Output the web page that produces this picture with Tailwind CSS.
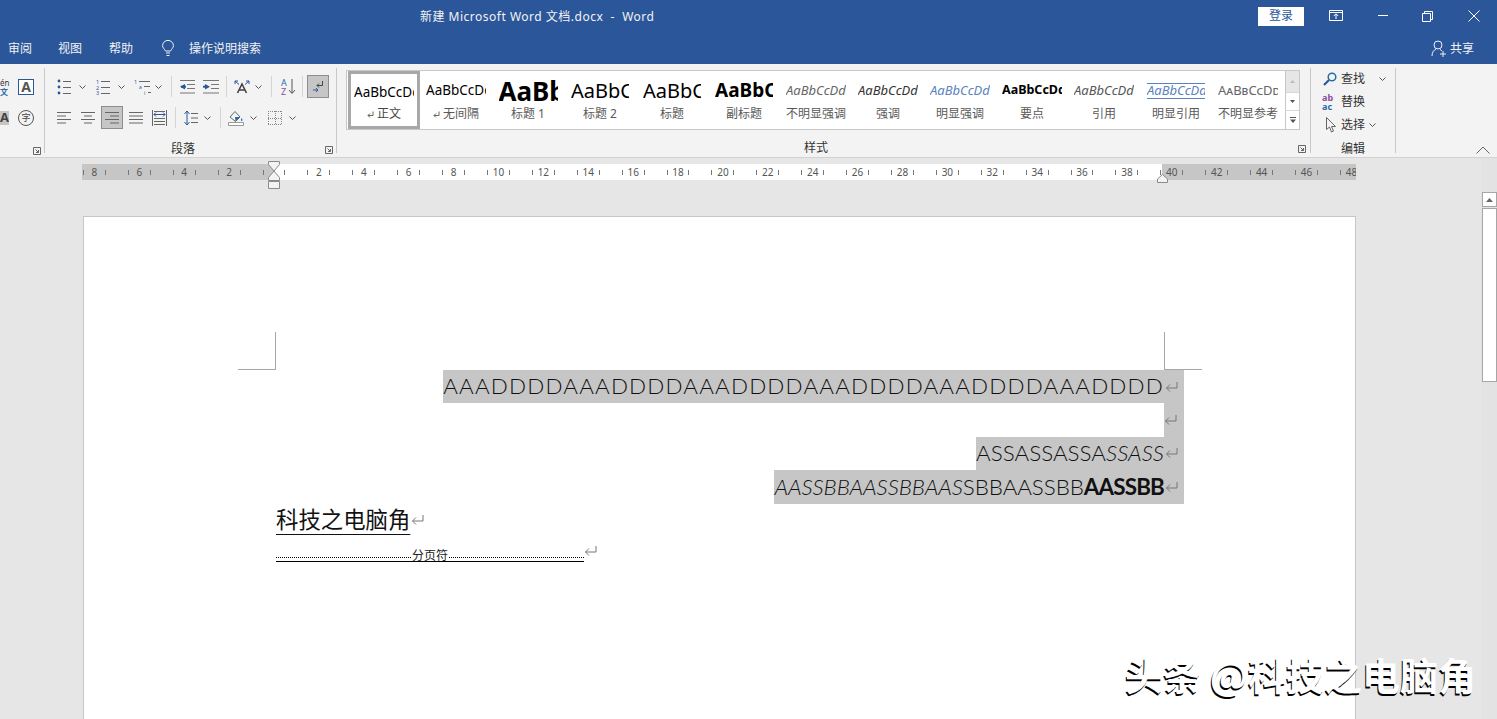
<!DOCTYPE html>
<html lang="zh">
<head>
<meta charset="utf-8">
<title>新建 Microsoft Word 文档.docx - Word</title>
<script src="https://cdn.jsdelivr.net/npm/@tailwindcss/browser@4"></script>
</head>
<body class="w-[1497px] h-[719px] overflow-hidden bg-[#e6e6e6] font-['Noto_Sans','Noto_Sans_CJK_SC',sans-serif] text-[12px] leading-none">

<!-- title bar -->
<header class="h-[32px] bg-[#2b579a] flex items-center text-[#f2f2f2]">
  <div class="ml-[420px] w-[838px] mt-[1px] text-[12px] tracking-[0.500px] whitespace-pre">新建 Microsoft Word 文档.docx  -  Word</div>
  <button class="w-[46px] h-[19px] bg-white text-[#2b579a] text-[12px] flex items-center justify-center">登录</button>
  <svg class="ml-[25px]" width="14" height="12" viewBox="0 0 14 12" fill="none" stroke="#fff"><path d="M.5 .5h13v10h-13zM.5 2.500h13M7 9V4M4.800 6 7 3.800 9.200 6"/></svg>
  <svg class="ml-[34px]" width="12" height="2" viewBox="0 0 12 2"><path d="M1 .5h10" stroke="#fff"/></svg>
  <svg class="ml-[33px]" width="11" height="11" viewBox="0 0 11 11" fill="none" stroke="#fff"><path d="M.5 2.500h8v8h-8zM2.500 2.500v-2h8v8h-2"/></svg>
  <svg class="ml-[35px]" width="12" height="12" viewBox="0 0 12 12" fill="none" stroke="#fff"><path d="M.5 .5l11 11M11.500 .5l-11 11"/></svg>
</header>

<!-- tab row -->
<nav class="h-[32px] bg-[#2b579a] flex items-center text-[#f2f2f2] text-[12px] pt-[1px]">
  <span class="ml-[8px]">审阅</span>
  <span class="ml-[26px]">视图</span>
  <span class="ml-[27px]">帮助</span>
  <svg class="ml-[29px]" width="12" height="17" viewBox="0 0 12 17" fill="none" stroke="#f2f2f2"><path d="M3.500 11C2.500 9 .6 8 .6 5.600a5.400 5.200 0 0 1 10.800 0C11.400 8 9.500 9 8.500 11zM4 13h4M4.500 15.500h3"/></svg>
  <span class="ml-[15px]">操作说明搜索</span>
  <svg class="ml-[1170px]" width="16" height="17" viewBox="0 0 16 17" fill="none" stroke="#f2f2f2"><circle cx="7" cy="5" r="4"/><path d="M1 16c0-4 2-6 4-7M9 9.500c.8.300 1.500.8 2 1.500M9 14h6M12 11v6"/></svg>
  <span class="ml-[3px]">共享</span>
</nav>

<!-- ribbon -->
<section class="h-[94px] bg-[#f3f3f3] border-b border-[#d2d2d2] flex text-[#444]">

  <!-- font group, cut off on the left -->
  <div class="w-[45px] my-[4px] border-r border-[#c8c8c8] relative shrink-0">
    <div class="h-[23px] mt-[7px] flex items-center">
      <div class="w-[18px] text-[8px] leading-[9px] text-[#333]">én<br><span class="text-[#2b6ca8] font-bold">文</span></div>
      <div class="w-[16px] h-[16px] border border-[#2b579a] bg-white flex items-center justify-center text-[14px] font-bold text-[#555]">A</div>
    </div>
    <div class="h-[23px] mt-[8px] flex items-center">
      <div class="w-[9px] h-[14px] bg-[#c6c6c6] text-[13px] font-bold flex items-center justify-end overflow-hidden">A</div>
      <div class="ml-[9px] w-[16px] h-[16px] rounded-full border border-[#555] flex items-center justify-center text-[9px]">字</div>
    </div>
    <svg class="absolute left-[33px] top-[79px]" width="8" height="8" viewBox="0 0 8 8" fill="none" stroke="#666"><path d="M.5 .5h7v7h-7zM2.500 2.500l3 3M5.500 3v2.500H3"/></svg>
  </div>

  <!-- paragraph group -->
  <div class="w-[292px] my-[4px] border-r border-[#c8c8c8] shrink-0">
    <div class="h-[23px] mt-[7px] flex items-center">
      <svg class="ml-[12px]" width="14" height="16" viewBox="0 0 14 16" stroke="#666"><circle cx="2" cy="2" r="1.400" fill="#2b579a" stroke="none"/><circle cx="2" cy="8" r="1.400" fill="#2b579a" stroke="none"/><circle cx="2" cy="14" r="1.400" fill="#2b579a" stroke="none"/><path d="M6 2.500h8M6 8.500h8M6 14.500h8"/></svg>
      <svg class="ml-[8px]" width="7" height="4" viewBox="0 0 7 4" fill="none" stroke="#555"><path d="M.5 .5l3 3 3-3"/></svg>
      <svg class="ml-[10px]" width="14" height="16" viewBox="0 0 14 16" stroke="#666"><text x="0" y="5" font-size="5.500" fill="#2b579a" stroke="none">1</text><text x="0" y="11" font-size="5.500" fill="#2b579a" stroke="none">2</text><text x="0" y="16" font-size="5.500" fill="#2b579a" stroke="none">3</text><path d="M5 2.500h9M5 8.500h9M5 14.500h9"/></svg>
      <svg class="ml-[8px]" width="7" height="4" viewBox="0 0 7 4" fill="none" stroke="#555"><path d="M.5 .5l3 3 3-3"/></svg>
      <svg class="ml-[9px]" width="18" height="16" viewBox="0 0 18 16" stroke="#666"><text x="0" y="5" font-size="5.500" fill="#2b579a" stroke="none">1</text><text x="5" y="10" font-size="5" fill="#2b579a" stroke="none">a</text><text x="10" y="16" font-size="5" fill="#2b579a" stroke="none">i</text><path d="M5 2.500h11M10 7.500h6M14 13.500h3"/></svg>
      <svg class="ml-[3px]" width="7" height="4" viewBox="0 0 7 4" fill="none" stroke="#555"><path d="M.5 .5l3 3 3-3"/></svg>
      <div class="ml-[9px] w-px h-[21px] bg-[#d4d4d4]"></div>
      <svg class="ml-[7px]" width="16" height="14" viewBox="0 0 16 14" fill="none" stroke="#777"><path d="M1 .5h15M8 4.500h8M8 8.500h8M1 13h15"/><path d="M6 4v5.500L1 6.700z" fill="#2b579a" stroke="none"/><path d="M2 6.700h5" stroke="#2b579a" stroke-width="2"/></svg>
      <svg class="ml-[8px]" width="16" height="14" viewBox="0 0 16 14" fill="none" stroke="#777"><path d="M0 .5h16M8 4.500h8M8 8.500h8M0 13h16"/><path d="M2 4v5.500L7 6.700z" fill="#2b579a" stroke="none"/><path d="M0 6.700h4" stroke="#2b579a" stroke-width="2"/></svg>
      <div class="ml-[7px] w-px h-[21px] bg-[#d4d4d4]"></div>
      <svg class="ml-[7px]" width="16" height="16" viewBox="0 0 16 16" fill="none"><path d="M3.500 14 8 5l4.500 9M5 11h6" stroke="#444" stroke-width="1.600"/><path d="M1 2l4 3.500M1 2h3M1 2v3M15 2l-4 3.500M15 2h-3M15 2v3" stroke="#2b579a"/></svg>
      <svg class="ml-[5px]" width="7" height="4" viewBox="0 0 7 4" fill="none" stroke="#555"><path d="M.5 .5l3 3 3-3"/></svg>
      <div class="ml-[9px] w-px h-[21px] bg-[#d4d4d4]"></div>
      <svg class="ml-[9px]" width="14" height="17" viewBox="0 0 14 17" fill="none"><text x="0" y="8" font-size="9" fill="#2b6ca8">A</text><text x="0" y="16.500" font-size="9" fill="#8a4fa0">Z</text><path d="M11 1v14M8 12l3 3.500 3-3.500" stroke="#555"/></svg>
      <div class="ml-[7px] w-px h-[21px] bg-[#d4d4d4]"></div>
      <div class="ml-[4px] w-[22px] h-[23px] bg-[#c6c6c6] border border-[#8e8e8e] flex items-center justify-center">
        <svg width="12" height="13" viewBox="0 0 12 13" fill="none"><path d="M10.500 1v4.500H5M7 3.500l-2 2 2 2" stroke="#444"/><path d="M1 10h5M4 8l2 2-2 2" stroke="#2b579a"/></svg>
      </div>
    </div>
    <div class="h-[23px] mt-[8px] flex items-center">
      <svg class="ml-[12px]" width="14" height="12" viewBox="0 0 14 12" stroke="#666"><path d="M0 .5h14M0 4h9M0 7.500h14M0 11h9"/></svg>
      <svg class="ml-[10px]" width="14" height="12" viewBox="0 0 14 12" stroke="#666"><path d="M0 .5h14M3 4h8M0 7.500h14M3 11h8"/></svg>
      <div class="ml-[6px] w-[22px] h-[23px] bg-[#c6c6c6] border border-[#8e8e8e] flex items-center justify-center">
        <svg width="14" height="12" viewBox="0 0 14 12" stroke="#666"><path d="M0 .5h14M5 4h9M0 7.500h14M5 11h9"/></svg>
      </div>
      <svg class="ml-[6px]" width="14" height="12" viewBox="0 0 14 12" stroke="#666"><path d="M0 .5h14M0 4h14M0 7.500h14M0 11h14"/></svg>
      <svg class="ml-[9px]" width="15" height="16" viewBox="0 0 15 16" fill="none" stroke="#666"><path d="M.5 0v16M14.500 0v16M2 1.500h11M2 14.500h11M2 11.500h11M2 8.500h11"/><path d="M2 4.500h11M2 4.500l2-2M2 4.500l2 2M13 4.500l-2-2M13 4.500l-2 2" stroke="#2b579a"/></svg>
      <div class="ml-[8px] w-px h-[21px] bg-[#d4d4d4]"></div>
      <svg class="ml-[8px]" width="14" height="16" viewBox="0 0 14 16" fill="none"><path d="M3 1v14M.5 4 3 1l2.500 3M.5 12 3 15l2.500-3" stroke="#2b579a"/><path d="M7 3.500h7M7 8h7M7 12.500h7" stroke="#666"/></svg>
      <svg class="ml-[6px]" width="7" height="4" viewBox="0 0 7 4" fill="none" stroke="#555"><path d="M.5 .5l3 3 3-3"/></svg>
      <div class="ml-[9px] w-px h-[21px] bg-[#d4d4d4]"></div>
      <svg class="ml-[7px]" width="16" height="16" viewBox="0 0 16 16" fill="none"><path d="M2 7 7 1.500 12 7l-4.500 4.500z" stroke="#666"/><path d="M7 7h5l-4.500 4.500z" fill="#2b6ca8"/><path d="M13.500 8c1 1.500 1.500 2.200 .5 3-1 .2-1.500-1-.5-3z" fill="#2b6ca8"/><path d="M.5 12.500h15v3H.5z" stroke="#999" fill="#fff"/></svg>
      <svg class="ml-[6px]" width="7" height="4" viewBox="0 0 7 4" fill="none" stroke="#555"><path d="M.5 .5l3 3 3-3"/></svg>
      <svg class="ml-[11px]" width="14" height="14" viewBox="0 0 14 14" fill="none" stroke="#888" stroke-dasharray="1 1"><path d="M.5 0v14M13.500 0v14M7.500 0v14M0 .5h14M0 13.500h14M0 7.500h14"/></svg>
      <svg class="ml-[7px]" width="7" height="4" viewBox="0 0 7 4" fill="none" stroke="#555"><path d="M.5 .5l3 3 3-3"/></svg>
    </div>
    <div class="h-[16px] mt-[12px] flex items-center">
      <div class="w-[276px] text-center text-[12px] text-[#333]">段落</div>
      <svg class="ml-[4px] mt-[2px]" width="8" height="8" viewBox="0 0 8 8" fill="none" stroke="#666"><path d="M.5 .5h7v7h-7zM2.500 2.500l3 3M5.500 3v2.500H3"/></svg>
    </div>
  </div>

  <!-- styles group -->
  <div class="w-[974px] my-[4px] border-r border-[#c8c8c8] shrink-0">
    <div class="ml-[9px] mt-[2px] w-[954px] h-[60px] bg-white border border-[#c8c8c8] flex text-[#595959] relative">
      <div class="w-[72px] h-[58px] border-[3px] border-[#a8a8a8] flex flex-col items-center ml-px shrink-0">
        <div class="w-[60px] h-[33px] overflow-hidden whitespace-nowrap flex items-center pt-[2px] text-[13.500px] text-black mt-[1px]">AaBbCcDd</div>
        <div class="h-[16px] mt-[-2px] flex items-center gap-[3px] text-[#444]"><svg width="7" height="7" viewBox="0 0 7 7" fill="none" stroke="#666"><path d="M6 .5V4.500H1M3 2.500l-2 2 2 2"/></svg>正文</div>
      </div>
      <div class="w-[72px] flex flex-col items-center shrink-0">
        <div class="w-[60px] h-[37px] overflow-hidden whitespace-nowrap flex items-center pt-[2px] text-[13.500px] text-black">AaBbCcDd</div>
        <div class="h-[16px] mt-[-2px] flex items-center gap-[3px]"><svg width="7" height="7" viewBox="0 0 7 7" fill="none" stroke="#666"><path d="M6 .5V4.500H1M3 2.500l-2 2 2 2"/></svg>无间隔</div>
      </div>
      <div class="w-[72px] flex flex-col items-center shrink-0">
        <div class="w-[59px] h-[37px] overflow-hidden whitespace-nowrap flex items-center pt-[2px] text-[26px] font-bold text-black">AaBbC</div>
        <div class="h-[16px] mt-[-2px] flex items-center">标题 1</div>
      </div>
      <div class="w-[72px] flex flex-col items-center shrink-0">
        <div class="w-[58px] h-[37px] overflow-hidden whitespace-nowrap flex items-center pt-[2px] text-[20px] text-black">AaBbCc</div>
        <div class="h-[16px] mt-[-2px] flex items-center">标题 2</div>
      </div>
      <div class="w-[72px] flex flex-col items-center shrink-0">
        <div class="w-[58px] h-[37px] overflow-hidden whitespace-nowrap flex items-center pt-[2px] text-[20px] text-black">AaBbCc</div>
        <div class="h-[16px] mt-[-2px] flex items-center">标题</div>
      </div>
      <div class="w-[72px] flex flex-col items-center shrink-0">
        <div class="w-[58px] h-[37px] overflow-hidden whitespace-nowrap flex items-center pt-[2px] text-[19px] font-bold text-black">AaBbCc</div>
        <div class="h-[16px] mt-[-2px] flex items-center">副标题</div>
      </div>
      <div class="w-[72px] flex flex-col items-center shrink-0">
        <div class="w-[60px] h-[37px] overflow-hidden whitespace-nowrap flex items-center pt-[2px] text-[13px] italic text-[#666]">AaBbCcDd</div>
        <div class="h-[16px] mt-[-2px] flex items-center">不明显强调</div>
      </div>
      <div class="w-[72px] flex flex-col items-center shrink-0">
        <div class="w-[60px] h-[37px] overflow-hidden whitespace-nowrap flex items-center pt-[2px] text-[13px] italic text-[#333]">AaBbCcDd</div>
        <div class="h-[16px] mt-[-2px] flex items-center">强调</div>
      </div>
      <div class="w-[72px] flex flex-col items-center shrink-0">
        <div class="w-[60px] h-[37px] overflow-hidden whitespace-nowrap flex items-center pt-[2px] text-[13px] italic text-[#5b82c0]">AaBbCcDd</div>
        <div class="h-[16px] mt-[-2px] flex items-center">明显强调</div>
      </div>
      <div class="w-[72px] flex flex-col items-center shrink-0">
        <div class="w-[60px] h-[37px] overflow-hidden whitespace-nowrap flex items-center pt-[2px] text-[12.500px] font-bold text-black">AaBbCcDd</div>
        <div class="h-[16px] mt-[-2px] flex items-center">要点</div>
      </div>
      <div class="w-[72px] flex flex-col items-center shrink-0">
        <div class="w-[60px] h-[37px] overflow-hidden whitespace-nowrap flex items-center pt-[2px] text-[13px] italic text-[#555]">AaBbCcDd</div>
        <div class="h-[16px] mt-[-2px] flex items-center">引用</div>
      </div>
      <div class="w-[72px] flex flex-col items-center shrink-0">
        <div class="w-[58px] h-[37px] flex items-center pt-[2px]">
          <div class="w-[58px] h-[16px] border-y border-[#5b82c0] overflow-hidden whitespace-nowrap flex items-center text-[13px] italic text-[#5b82c0]">AaBbCcDd</div>
        </div>
        <div class="h-[16px] mt-[-2px] flex items-center">明显引用</div>
      </div>
      <div class="w-[72px] flex flex-col items-center shrink-0">
        <div class="w-[60px] h-[37px] overflow-hidden whitespace-nowrap flex items-center pt-[2px] text-[13px] [font-variant:small-caps] text-[#666]">AaBbCcDd</div>
        <div class="h-[16px] mt-[-2px] flex items-center">不明显参考</div>
      </div>
      <div class="absolute right-0 top-0 bottom-0 w-[14px] bg-white border-l border-[#c8c8c8] flex flex-col">
        <div class="h-[21px] bg-[#e6e6e6] flex items-center justify-center"><svg width="5" height="3" viewBox="0 0 5 3"><path d="M2.500 0 5 3H0z" fill="#bbb"/></svg></div>
        <div class="h-[19px] border-y border-[#d8d8d8] flex items-center justify-center"><svg width="5" height="3" viewBox="0 0 5 3"><path d="M2.500 3 5 0H0z" fill="#555"/></svg></div>
        <div class="flex-1 flex items-center justify-center"><svg width="6" height="6" viewBox="0 0 6 6"><path d="M0 .5h6" stroke="#555"/><path d="M3 6 6 2.500H0z" fill="#555"/></svg></div>
      </div>
    </div>
    <div class="h-[16px] mt-[10px] flex items-center">
      <div class="ml-[446px] w-[66px] text-center text-[#333]">样式</div>
      <svg class="ml-[449px] mt-[2px]" width="8" height="8" viewBox="0 0 8 8" fill="none" stroke="#666"><path d="M.5 .5h7v7h-7zM2.500 2.500l3 3M5.500 3v2.500H3"/></svg>
    </div>
  </div>

  <!-- editing group -->
  <div class="w-[85px] my-[4px] border-r border-[#c8c8c8] shrink-0 text-[#333]">
    <div class="h-[23px] flex items-center mt-[-1px]">
      <svg class="ml-[12px]" width="14" height="14" viewBox="0 0 14 14" fill="none"><circle cx="9" cy="5" r="3.800" stroke="#2b6ca8" stroke-width="1.500"/><path d="M6 8 1 13" stroke="#2b579a" stroke-width="2.200"/></svg>
      <span class="ml-[4px]">查找</span>
      <svg class="ml-[14px]" width="7" height="4" viewBox="0 0 7 4" fill="none" stroke="#555"><path d="M.5 .5l3 3 3-3"/></svg>
    </div>
    <div class="h-[23px] flex items-center">
      <div class="ml-[11px] w-[16px] text-[9px] leading-[9px] font-bold"><span class="text-[#8a4fa0]">ab</span><br><span class="text-[#2b6ca8]">ac</span></div>
      <span class="ml-[3px]">替换</span>
    </div>
    <div class="h-[23px] flex items-center">
      <svg class="ml-[15px]" width="10" height="16" viewBox="0 0 10 16" fill="none" stroke="#666"><path d="M.5 .5v12l3-2.500 2 5 2-1-2-4.500h4z"/></svg>
      <span class="ml-[5px]">选择</span>
      <svg class="ml-[4px]" width="7" height="4" viewBox="0 0 7 4" fill="none" stroke="#555"><path d="M.5 .5l3 3 3-3"/></svg>
    </div>
    <div class="h-[16px] mt-[5px] text-center flex items-center justify-center">编辑</div>
  </div>

  <!-- collapse ribbon -->
  <div class="flex-1 flex items-end justify-end pb-[3px] pr-[7px]">
    <svg width="14" height="8" viewBox="0 0 14 8" fill="none" stroke="#666"><path d="M.5 7.500 7 1l6.500 6.500"/></svg>
  </div>
</section>

<main class="flex h-[561px] overflow-hidden relative">
  <div class="w-[1481px] shrink-0">
    <!-- ruler -->
    <div class="relative ml-[82px] mt-[6px] w-[1274px]">
      <div class="h-[16px] overflow-hidden bg-[linear-gradient(to_right,#c6c6c6_193px,#fff_193px,#fff_1080px,#c6c6c6_1080px)] flex items-center text-[10px] text-[#555]">
        <div class="flex ml-[-10px] [&>div]:w-[44.900px] [&>div]:shrink-0 [&>div]:flex [&>div]:items-center [&>div]:justify-between [&>div]:px-[11px] [&_span]:text-center [&_i]:w-px [&_i]:h-[5px] [&_i]:bg-[#777]">
          <div><i></i><span>8</span><i></i></div>
          <div><i></i><span>6</span><i></i></div>
          <div><i></i><span>4</span><i></i></div>
          <div><i></i><span>2</span><i></i></div>
          <div><i></i><span></span><i></i></div>
          <div><i></i><span>2</span><i></i></div>
          <div><i></i><span>4</span><i></i></div>
          <div><i></i><span>6</span><i></i></div>
          <div><i></i><span>8</span><i></i></div>
          <div><i></i><span>10</span><i></i></div>
          <div><i></i><span>12</span><i></i></div>
          <div><i></i><span>14</span><i></i></div>
          <div><i></i><span>16</span><i></i></div>
          <div><i></i><span>18</span><i></i></div>
          <div><i></i><span>20</span><i></i></div>
          <div><i></i><span>22</span><i></i></div>
          <div><i></i><span>24</span><i></i></div>
          <div><i></i><span>26</span><i></i></div>
          <div><i></i><span>28</span><i></i></div>
          <div><i></i><span>30</span><i></i></div>
          <div><i></i><span>32</span><i></i></div>
          <div><i></i><span>34</span><i></i></div>
          <div><i></i><span>36</span><i></i></div>
          <div><i></i><span>38</span><i></i></div>
          <div><i></i><span>40</span><i></i></div>
          <div><i></i><span>42</span><i></i></div>
          <div><i></i><span>44</span><i></i></div>
          <div><i></i><span>46</span><i></i></div>
          <div><i></i><span>48</span><i></i></div>
        </div>
      </div>
      <!-- indent markers -->
      <svg class="absolute left-[186px] top-[-3px]" width="13" height="28" viewBox="0 0 13 28" fill="#f3f3f3" stroke="#8a8a8a"><path d="M.5 .5h11v3L6 10 .5 3.500zM6 10l5.500 6.500v3H.5v-3zM.5 20.500h11v7H.5z"/></svg>
      <svg class="absolute left-[1075px] top-[10px]" width="11" height="9" viewBox="0 0 11 9" fill="#f3f3f3" stroke="#8a8a8a"><path d="M.5 8.500V5L5.500 .5l5 4.500v3.500z"/></svg>
    </div>

    <!-- page -->
    <div class="relative ml-[83px] mt-[36px] w-[1273px] h-[600px] bg-white border border-[#c6c6c6] text-[#111]">
      <!-- crop marks -->
      <div class="absolute left-[154px] top-[152px] w-[37px] h-[1px] bg-[#a6a6a6]"></div>
      <div class="absolute left-[191px] top-[115px] w-[1px] h-[38px] bg-[#a6a6a6]"></div>
      <div class="absolute left-[1080px] top-[115px] w-[1px] h-[38px] bg-[#a6a6a6]"></div>
      <div class="absolute left-[1080px] top-[152px] w-[38px] h-[1px] bg-[#a6a6a6]"></div>

      <div class="ml-[192px] pt-[153px] w-[908px] text-[22.400px] font-['Lato','Noto_Sans_CJK_SC',sans-serif] font-light">
        <div class="h-[33.400px] flex justify-end">
          <div class="bg-[#c6c6c6] h-[33.400px] flex items-center whitespace-pre"><span class="tracking-[1.190px]">AAADDDDAAADDDDAAADDDDAAADDDDAAADDDDAAADDDD</span><svg class="ml-[1px] mr-[6px]" width="13" height="12" viewBox="0 0 13 12" fill="none" stroke="#777"><path d="M12 1v6H1.500M5 3.500 1.500 7 5 10.500"/></svg></div>
        </div>
        <div class="h-[33.400px] flex justify-end">
          <div class="bg-[#c6c6c6] h-[33.400px] flex items-center w-[20px]"><svg width="13" height="12" viewBox="0 0 13 12" fill="none" stroke="#777"><path d="M12 1v6H1.500M5 3.500 1.500 7 5 10.500"/></svg></div>
        </div>
        <div class="h-[33.400px] flex justify-end">
          <div class="bg-[#c6c6c6] h-[33.400px] flex items-center whitespace-pre"><span>ASSASSASSA<em>SSASS</em></span><svg class="ml-[1px] mr-[6px]" width="13" height="12" viewBox="0 0 13 12" fill="none" stroke="#777"><path d="M12 1v6H1.500M5 3.500 1.500 7 5 10.500"/></svg></div>
        </div>
        <div class="h-[33.400px] flex justify-end">
          <div class="bg-[#c6c6c6] h-[33.400px] flex items-center whitespace-pre"><span class="tracking-[-0.080px]"><em>AASSBBAASSBBAAS</em>SBBAASSBB<strong class="font-bold tracking-[-0.830px]">AASSBB</strong></span><svg class="ml-[1px] mr-[6px]" width="13" height="12" viewBox="0 0 13 12" fill="none" stroke="#777"><path d="M12 1v6H1.500M5 3.500 1.500 7 5 10.500"/></svg></div>
        </div>
        <div class="h-[33.400px] pb-[4px] flex items-center whitespace-pre font-['Noto_Sans_CJK_SC',sans-serif] font-normal">
          <span class="underline underline-offset-[6px] decoration-1">科技之电脑角</span><svg class="ml-[1px] mt-[4px]" width="13" height="12" viewBox="0 0 13 12" fill="none" stroke="#777"><path d="M12 1v6H1.500M5 3.500 1.500 7 5 10.500"/></svg>
        </div>
      </div>

      <!-- page break -->
      <div class="ml-[192px] mt-[13px] flex items-start">
        <div class="w-[308px]">
          <div class="flex items-center h-[12px] text-[12px] text-[#222]">
            <div class="flex-1 border-t border-dotted border-black mt-[3px]"></div>
            <span class="mx-[1px]">分页符</span>
            <div class="flex-1 border-t border-dotted border-black mt-[3px]"></div>
          </div>
          <div class="h-px bg-black mt-[-1px]"></div>
        </div>
        <svg class="mt-[-5px]" width="13" height="12" viewBox="0 0 13 12" fill="none" stroke="#777"><path d="M12 1v6H1.500M5 3.500 1.500 7 5 10.500"/></svg>
      </div>
    </div>
  </div>

  <!-- scrollbar -->
  <div class="w-[16px] pt-[34px] flex flex-col items-center bg-[#e3e3e3]">
    <div class="w-[15px] h-[15px] bg-white border border-[#a6a6a6] flex items-center justify-center"><svg width="7" height="4" viewBox="0 0 7 4"><path d="M3.500 0 7 4H0z" fill="#666"/></svg></div>
    <div class="w-[15px] h-[174px] bg-white border border-[#a6a6a6] mt-[1px]"></div>
  </div>

  <!-- watermark -->
  <div class="absolute left-[1125px] top-[497px] whitespace-pre text-[38px] font-bold text-white font-['Noto_Sans_CJK_SC',sans-serif] [text-shadow:-1px_2px_0_#000]">头条 @科技之电脑角</div>
</main>
</body>
</html>
